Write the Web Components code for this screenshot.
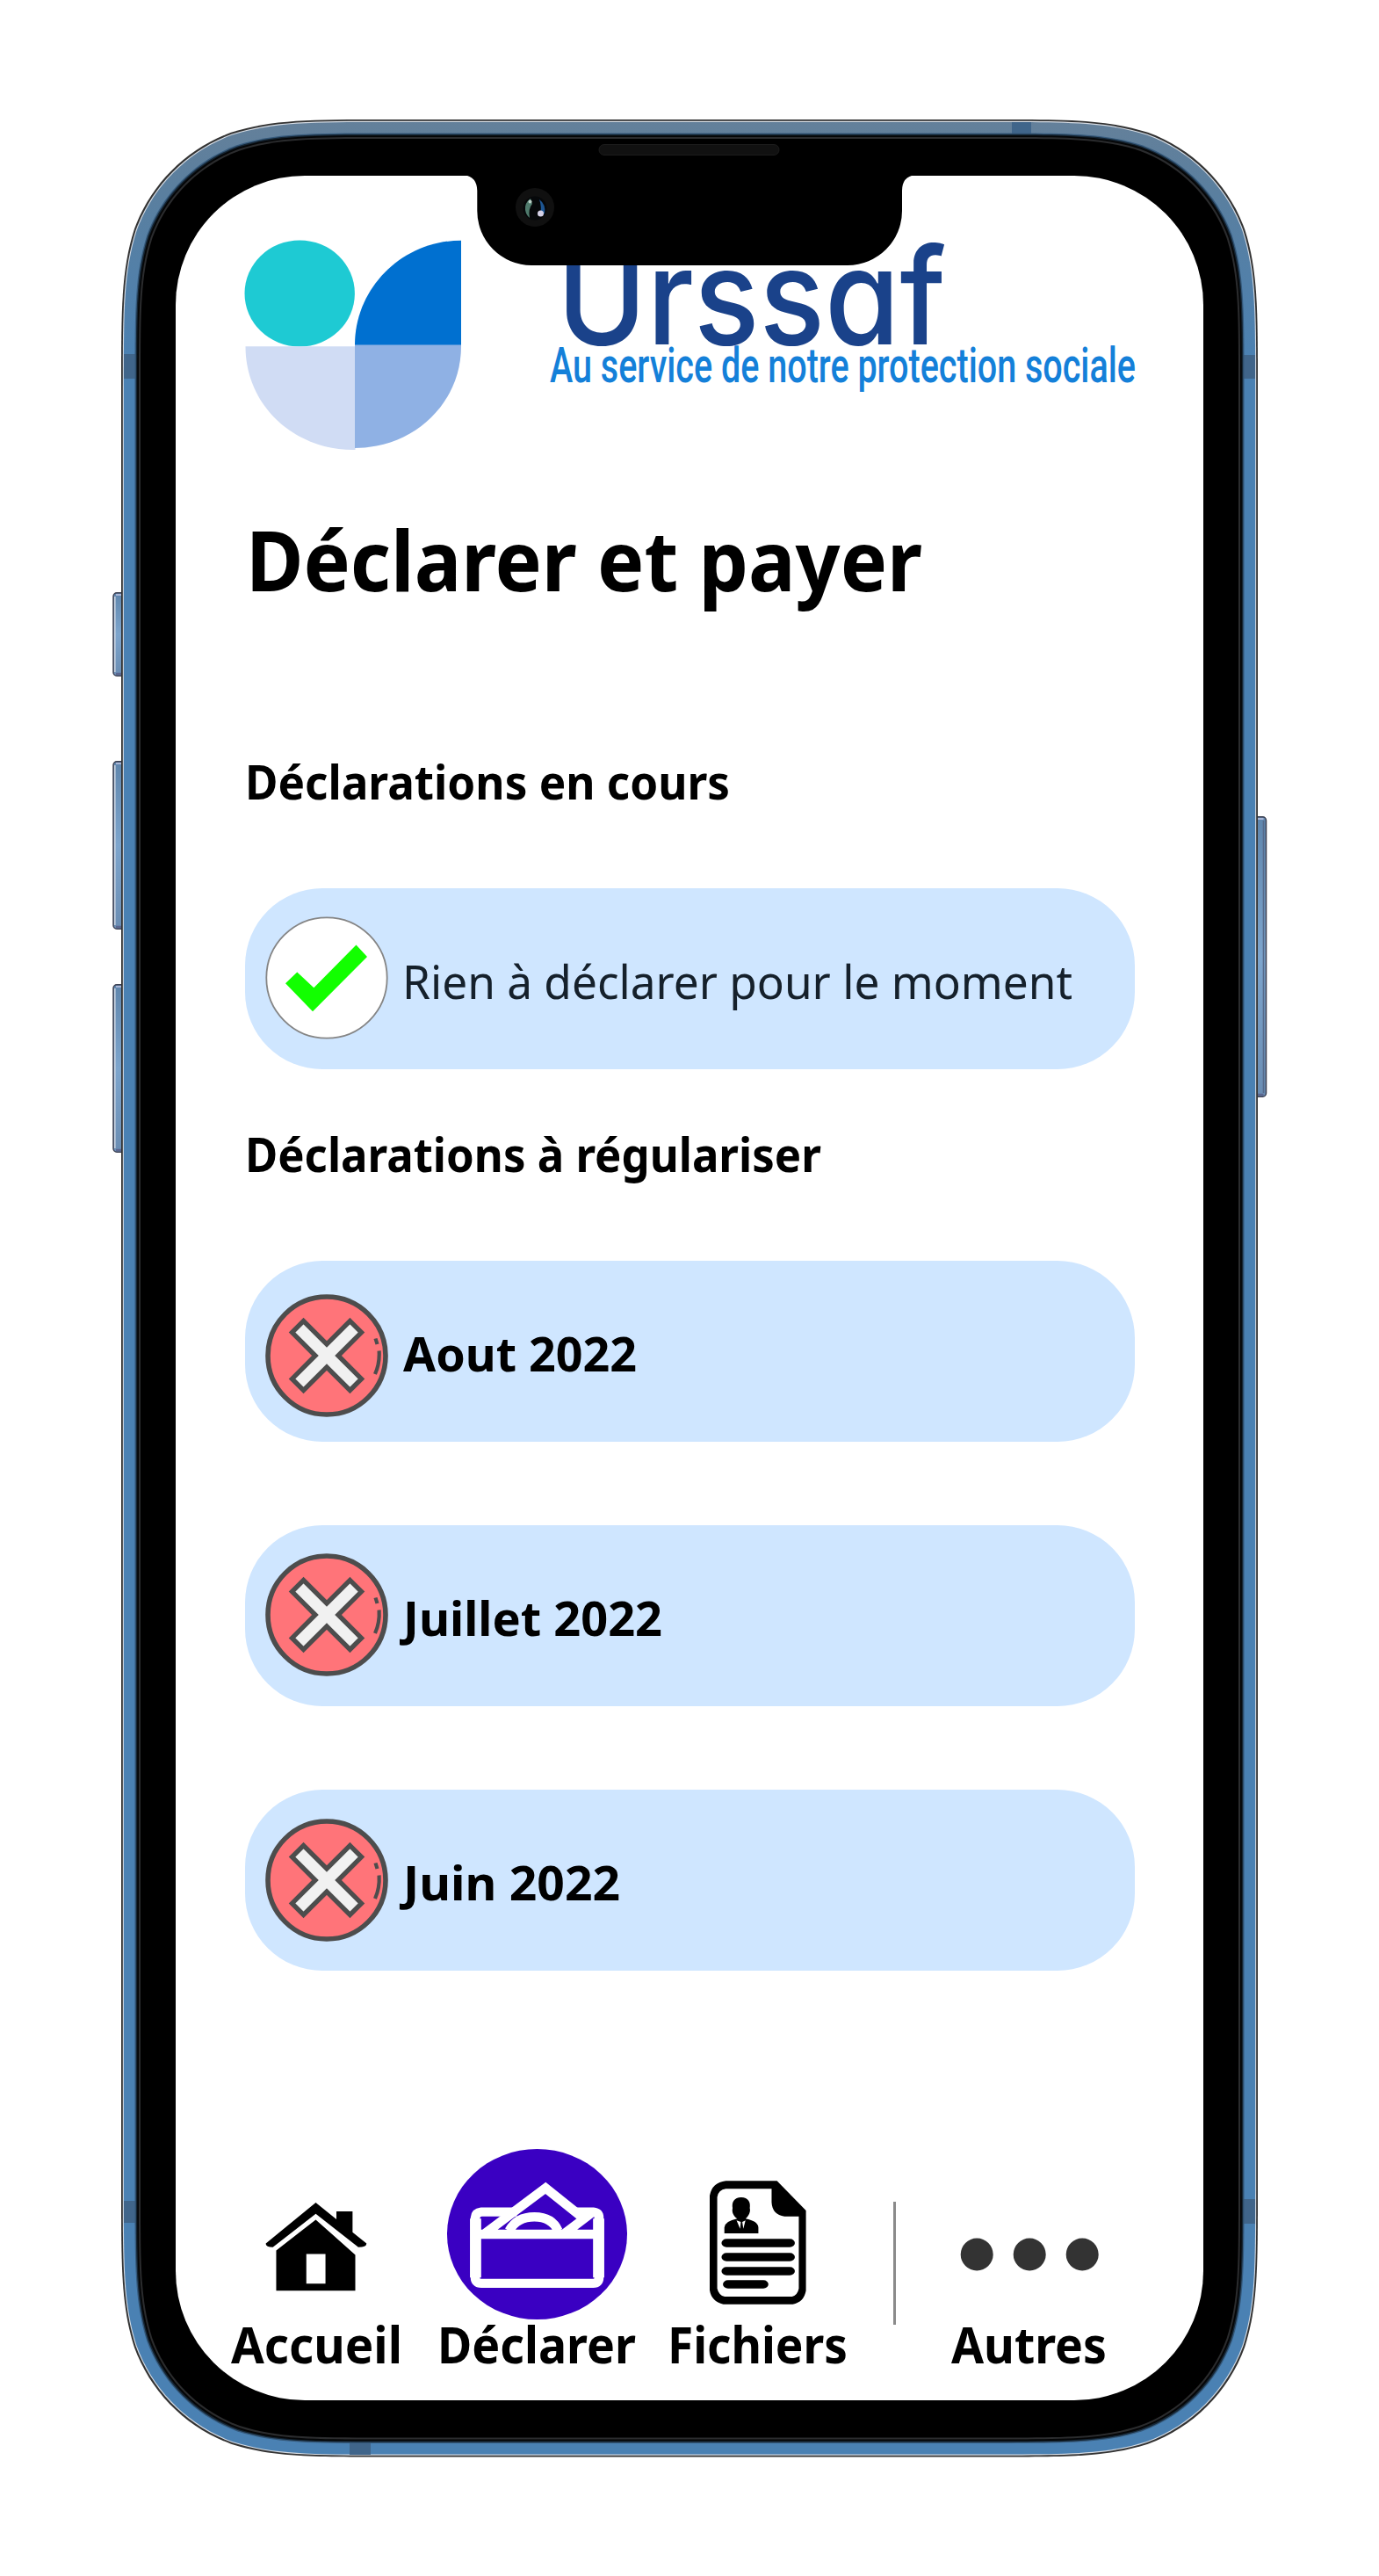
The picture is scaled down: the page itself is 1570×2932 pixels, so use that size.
<!DOCTYPE html>
<html lang="fr">
<head>
<meta charset="utf-8">
<title>Urssaf</title>
<style>
  html, body { margin: 0; background: #fff; }
  body { font-family: "Noto Sans", "Open Sans", sans-serif; color: #000; }
</style>
</head>
<body>
<phone-frame>
  <urssaf-header></urssaf-header>
  <page-title></page-title>
  <section-title text="Déclarations en cours" width="552"></section-title>
  <status-card kind="ok" text="Rien à déclarer pour le moment" width="763"></status-card>
  <section-title text="Déclarations à régulariser" width="656" class="second"></section-title>
  <status-card kind="late" text="Aout 2022" width="266"></status-card>
  <status-card kind="late" text="Juillet 2022" width="295" lift="5.5" class="next"></status-card>
  <status-card kind="late" text="Juin 2022" width="247" lift="5.2" class="next"></status-card>
  <tab-bar></tab-bar>
</phone-frame>
<script>
const shadow = (el, html) => { el.attachShadow({ mode: 'open' }).innerHTML = html; };

/* One line of text stretched to a given width; the baseline sits at `base`. */
class FitText extends HTMLElement {
  connectedCallback() {
    const a = n => this.getAttribute(n);
    const h = a('height') || 80, base = a('base') || 60;
    shadow(this, `<style>
      :host { display: block; flex: none; width: ${a('width')}px; height: ${h}px; }
      svg { display: block; overflow: visible; }
      text { font-family: ${a('family') || 'inherit'}; font-size: ${a('size')}px; font-weight: ${a('weight') || 400};
             fill: ${a('color') || '#000'}; font-feature-settings: ${a('features') || 'normal'}; }
    </style>
    <svg width="${a('width')}" height="${h}"><text x="0" y="${base}" textLength="${a('width')}" lengthAdjust="spacingAndGlyphs">${a('text')}</text></svg>`);
  }
}
customElements.define('fit-text', FitText);

/* Continuous-curvature rounded rectangle. */
function squircle(x0, y0, x1, y1, r) {
  const a = 1.52866 * r, b = 1.08849 * r, c = .86841 * r, d = .63149 * r,
        e = .07491 * r, f = .37282 * r, g = .16906 * r;
  return `M${x0 + a} ${y0}H${x1 - a}
    C${x1 - b} ${y0} ${x1 - c} ${y0} ${x1 - d} ${y0 + e}C${x1 - f} ${y0 + g} ${x1 - g} ${y0 + f} ${x1 - e} ${y0 + d}C${x1} ${y0 + c} ${x1} ${y0 + b} ${x1} ${y0 + a}
    V${y1 - a}C${x1} ${y1 - b} ${x1} ${y1 - c} ${x1 - e} ${y1 - d}C${x1 - g} ${y1 - f} ${x1 - f} ${y1 - g} ${x1 - d} ${y1 - e}C${x1 - c} ${y1} ${x1 - b} ${y1} ${x1 - a} ${y1}
    H${x0 + a}C${x0 + b} ${y1} ${x0 + c} ${y1} ${x0 + d} ${y1 - e}C${x0 + f} ${y1 - g} ${x0 + g} ${y1 - f} ${x0 + e} ${y1 - d}C${x0} ${y1 - c} ${x0} ${y1 - b} ${x0} ${y1 - a}
    V${y0 + a}C${x0} ${y0 + b} ${x0} ${y0 + c} ${x0 + e} ${y0 + d}C${x0 + g} ${y0 + f} ${x0 + f} ${y0 + g} ${x0 + d} ${y0 + e}C${x0 + c} ${y0} ${x0 + b} ${y0} ${x0 + a} ${y0}Z`;
}

class PhoneFrame extends HTMLElement {
  connectedCallback() {
    const ring = (i, r, fill) => `<path d="${squircle(138 + i, 136 + i, 1432 - i, 2796.5 - i, r)}" fill="${fill}"/>`;
    const btn = (x, y, h, side) => `<rect x="${x + 1}" y="${y + .75}" width="18" height="${h - 1.5}" rx="4" fill="url(#side)" stroke="#3c3f50" stroke-width="1.5"/>
      <path d="M${side < 0 ? x + 2.8 : x + 16} ${y + 5}v${h - 10}" stroke="${side < 0 ? '#c9d4e2' : '#566b8c'}" stroke-width="1.6"/>
      <path d="M${x + 4} ${y + 3}h12" stroke="#aab6d6" stroke-width="2"/><path d="M${x + 4} ${y + h - 3}h12" stroke="#5b6690" stroke-width="2.5"/>`;
    shadow(this, `<style>
      :host { display: flex; position: relative; box-sizing: border-box; width: 1570px; height: 2932px; padding: 200px; }
      .body, .notch { position: absolute; left: 0; top: 0; }
      .screen { position: relative; flex: 1; display: flex; flex-direction: column; box-sizing: border-box;
                background: #fff; border-radius: 147px; padding: 73px 78px 0; overflow: hidden; }
    </style>
    <svg class="body" width="1570" height="2932" viewBox="0 0 1570 2932">
      <defs>
        <linearGradient id="blue" gradientUnits="userSpaceOnUse" x1="0" y1="136" x2="0" y2="420"><stop offset="0" stop-color="#64809a"/><stop offset=".3" stop-color="#5a7f9f"/><stop offset="1" stop-color="#4a81b3"/></linearGradient>
        <linearGradient id="side" x1="0" y1="0" x2="0" y2="1"><stop offset="0" stop-color="#5f86ad"/><stop offset=".5" stop-color="#7da5cd"/><stop offset="1" stop-color="#6a8db3"/></linearGradient>
      </defs>
      ${btn(128, 674, 96, -1)}${btn(128, 866, 192, -1)}${btn(128, 1120, 192, -1)}${btn(1422.5, 929, 320, 1)}
      ${ring(0, 198, '#333')}${ring(1.8, 197, '#d5dbe3')}${ring(2.9, 196, 'url(#blue)')}
      <g fill="#40658a"><path d="M141 403h16v28h-16zM141 2505h16v25h-16zM1413 404h16v27h-16zM1413 2503h16v28h-16zM1152 139h22v17h-22zM398 2778h24v16h-24z"/></g>
      ${ring(15.5, 184, '#35597b')}${ring(16.8, 183, '#152533')}${ring(18.2, 182, '#050607')}${ring(20, 181, '#2b2c2e')}${ring(22, 179, '#000')}
    </svg>
    <div class="screen"><slot></slot></div>
    <svg class="notch" width="1570" height="320" viewBox="0 0 1570 320">
      <path d="M528 199Q543 201 543.3 217V240A62 62 0 0 0 605 302H965A62 62 0 0 0 1027 240V217Q1027 201 1042 199Z"/>
      <rect x="682" y="164.500" width="205" height="12" rx="6" fill="#111" stroke="#1c1c1c"/>
      <circle cx="609" cy="236" r="22" fill="#101010"/>
      <circle cx="609" cy="237" r="13.500" fill="#06080a"/>
      <path d="M604 226Q597 231 598 239Q599 245 603 248Q601 238 606 232Z" fill="#4f7a6c"/>
      <path d="M614 227Q622 233 620 243L615 245Q617 235 614 227Z" fill="#1d5592"/>
      <circle cx="603.500" cy="229.500" r="2" fill="#b9cfc6"/><circle cx="615.500" cy="243" r="3.500" fill="#d6d2e8"/>
    </svg>`);
  }
}

class UrssafHeader extends HTMLElement {
  connectedCallback() {
    shadow(this, `<style>
      :host { display: flex; flex: none; width: 1014px; height: 240px; }
      .mark { flex: none; margin-right: 100px; }
      .words { display: flex; flex-direction: column; }
      .brand { margin-left: 8px; }
    </style>
    <svg class="mark" width="248" height="240" viewBox="0 0 248 240">
      <ellipse cx="63.200" cy="61" rx="62.700" ry="60.500" fill="#1ecad3"/>
      <path d="M126 120V119.500C126 55 180 .7 247 .7V120Z" fill="#0070d0"/>
      <path d="M1.500 121.300H126.500V239H124C56 239 1.500 188 1.500 121.300Z" fill="#d0dcf4"/>
      <path d="M126 119.500H247V121C247 187 192 237 126 237Z" fill="#8fb1e4"/>
    </svg>
    <div class="words">
      <fit-text class="brand" text="Urssaf" width="443" size="152" weight="500" height="118" base="119" family="Inter, sans-serif" features="'cv11','ss02' 0" color="#1a428a"></fit-text>
      <fit-text text="Au service de notre protection sociale" width="667" size="56" height="60" base="43.500" weight="500" family="Roboto, sans-serif" color="#1480d9"></fit-text>
    </div>`);
  }
}

class PageTitle extends HTMLElement {
  connectedCallback() {
    shadow(this, `<style>:host { display: block; flex: none; padding: 60px 0 0 1.500px; height: 220px; }</style>
      <fit-text text="Déclarer et payer" width="770" size="95.500" weight="700" height="120" base="100"></fit-text>`);
  }
}

class SectionTitle extends HTMLElement {
  connectedCallback() {
    shadow(this, `<style>:host { display: block; flex: none; height: 158px; padding: 60px 0 0 .800px; }
      :host(.second) { height: 158.500px; }</style>
      <fit-text text="${this.getAttribute('text')}" width="${this.getAttribute('width')}" size="53.500" weight="700" base="56.500"></fit-text>`);
  }
}

const icons = {
  ok: `<circle cx="70" cy="70" r="68.700" fill="#fff" stroke="#858585" stroke-width="1.800"/>
    <path d="M23 76.300L36.300 63.500L55.300 81.300L103.500 32.500L116 46L54 108.300Z" fill="#12ff00"/>`,
  late: `<g transform="translate(70 70)" stroke="#4d4d4d">
    <circle r="67" fill="#ff7479" stroke-width="5.600"/>
    <path transform="rotate(45)" d="M-9.200 -46.600H9.200V-9.200H46.600V9.200H9.200V46.600H-9.200V9.200H-46.600V-9.200H-9.200Z" fill="#f1f1f1" stroke-width="5.400"/>
    <path d="M55.500 -19.500L57.500 -13M59.600 -5.500Q60.500 9 55 21" fill="none" stroke-width="4.200"/></g>`
};
class StatusCard extends HTMLElement {
  connectedCallback() {
    const ok = this.getAttribute('kind') === 'ok', lift = this.getAttribute('lift') || 0;
    const top = (ok ? 32 : 37.7) - lift;
    shadow(this, `<style>
      :host { display: flex; flex: none; box-sizing: border-box; width: 1013px; height: 205.500px; padding-left: 24.500px; margin-left: .500px;
              background: #cfe6ff; border-radius: 88px; align-items: flex-start; }
      :host(.next) { margin-top: 95.500px; }
      svg { flex: none; margin: ${top}px ${ok ? 15.5 : 16.5}px 0 -1px; }
      fit-text { margin-top: 60px; }
    </style>
    <svg width="140" height="140" viewBox="0 0 140 140">${icons[this.getAttribute('kind')]}</svg>
    <fit-text text="${this.getAttribute('text')}" width="${this.getAttribute('width')}" size="53.500" weight="${ok ? 400 : 700}"
      color="${ok ? '#15202b' : '#000'}" base="66"></fit-text>`);
  }
}

class TabItem extends HTMLElement {
  connectedCallback() {
    const a = n => this.getAttribute(n);
    shadow(this, `<style>
      :host { display: flex; flex-direction: column; align-items: center; flex: none; width: ${a('width')}px; height: 276px; }
      .icon { display: flex; flex: 1; align-items: flex-end; margin-bottom: ${a('gap')}px; }
    </style>
    <div class="icon"><slot></slot></div>
    <fit-text text="${a('label')}" width="${a('width')}" size="57.500" weight="700" height="70" base="48.500"></fit-text>`);
  }
}

class TabBar extends HTMLElement {
  connectedCallback() {
    shadow(this, `<style>
      :host { display: flex; flex: none; align-items: flex-start; margin: 192.500px -78px 0; padding-left: 62.500px; }
      svg { display: block; }
      .line { width: 2.500px; height: 140px; background: #8a8a8a; margin: 71px 63.500px 0 52px; }
    </style>
    <tab-item label="Accueil" width="195" gap="33" style="margin-right:40.500px">
      <svg width="116" height="101" viewBox="180 261 335 302" preserveAspectRatio="none">
        <path d="M346 261L182 400Q180 412 205 413L346 299L486 413Q513 413 513 400L467 362V291H414V318Z"/>
        <path fill-rule="evenodd" d="M346 319L476 439V561H216V424ZM315 436V537H378V436Z"/>
      </svg>
    </tab-item>
    <tab-item label="Déclarer" width="226" gap="1" style="margin-right:40px">
      <svg width="205" height="194" viewBox="780 78 594 580" preserveAspectRatio="none">
        <ellipse cx="1077" cy="368" rx="297" ry="290" fill="#3a00c2"/>
        <path fill="none" stroke="#fff" stroke-width="31" d="M873 368H1279M985 356Q1010 309 1068 309Q1126 309 1146 356M905 365L1105 211L1232 316M1160 371L1255 297"/>
        <path fill="none" stroke="#fff" stroke-width="31" d="M1205 292H1262Q1281 294 1281 312V515Q1281 535 1262 535H893Q873 535 873 515V312Q874 294 893 292H1010"/>
        <path fill="none" stroke="#fff" stroke-width="37" d="M874 315V515M1280 315V515"/>
      </svg>
    </tab-item>
    <tab-item label="Fichiers" width="205" gap="18" style="margin-left:-4px">
      <svg width="110" height="141" viewBox="213 184 270 423" preserveAspectRatio="none">
        <path fill-rule="evenodd" d="M258 185H401L482 286V560Q476 600 445 606H251Q218 596 213 558V235Q220 190 258 185ZM258 212Q237 216 234 240V552Q238 575 255 580H443Q459 574 462 552V306H422Q388 300 386 258V212Z"/>
        <g stroke="#000" stroke-width="28" stroke-linecap="round"><path d="M260 397H437M260 445H437M260 493H437M264 538H363"/></g>
        <path d="M301 241C321 241 328 258 325 278C328 290 322 306 313 314Q348 322 349 344V364H254V344Q256 322 290 314C280 306 274 292 277 278C274 258 281 241 301 241Z"/>
        <path d="M288 320L298 348L300 325ZM313 320L307 348L304 325Z" fill="#fff"/>
      </svg>
    </tab-item>
    <div class="line"></div>
    <tab-item label="Autres" width="177" gap="56.500">
      <svg width="158" height="38" viewBox="0 0 158 38" fill="#333"><circle cx="19.200" cy="19" r="18.500"/><circle cx="79.200" cy="19" r="18.500"/><circle cx="139.200" cy="19" r="18.500"/></svg>
    </tab-item>`);
  }
}
customElements.define('page-title', PageTitle);
customElements.define('section-title', SectionTitle);
customElements.define('status-card', StatusCard);
customElements.define('tab-item', TabItem);
customElements.define('tab-bar', TabBar);
customElements.define('urssaf-header', UrssafHeader);
customElements.define('phone-frame', PhoneFrame);
</script>
</body>
</html>
